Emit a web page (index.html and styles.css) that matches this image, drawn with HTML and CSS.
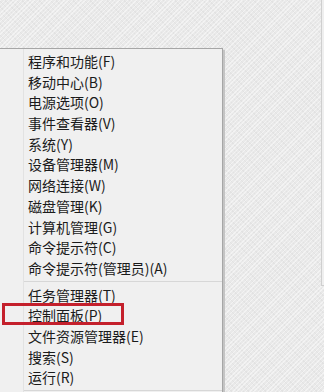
FILE: index.html
```html
<!DOCTYPE html>
<html lang="zh-CN">
<head>
<meta charset="utf-8">
<link rel="stylesheet" href="styles.css">
</head>
<body>
<div class="page">
  <div class="edge"></div>
  <div class="menu">
    <div class="group">
      <div class="item">程序和功能(F)</div>
      <div class="item">移动中心(B)</div>
      <div class="item">电源选项(O)</div>
      <div class="item">事件查看器(V)</div>
      <div class="item">系统(Y)</div>
      <div class="item">设备管理器(M)</div>
      <div class="item">网络连接(W)</div>
      <div class="item">磁盘管理(K)</div>
      <div class="item">计算机管理(G)</div>
      <div class="item">命令提示符(C)</div>
      <div class="item">命令提示符(管理员)(A)</div>
    </div>
    <div class="sep"></div>
    <div class="group">
      <div class="item">任务管理器(T)</div>
      <div class="item">控制面板(P)</div>
      <div class="item">文件资源管理器(E)</div>
      <div class="item">搜索(S)</div>
      <div class="item">运行(R)</div>
    </div>
    <div class="sep last"></div>
  </div>
  <div class="highlight"></div>
</div>
</body>
</html>
```

FILE: styles.css
```css
html, body {
  margin: 0;
  padding: 0;
}
body {
  width: 324px;
  height: 392px;
  overflow: hidden;
  background-color: #e9e9e9;
  background-image:
    repeating-linear-gradient(135deg, rgba(255,255,255,0.45) 0 1px, rgba(255,255,255,0) 1px 3px),
    repeating-linear-gradient(45deg, rgba(0,0,0,0.03) 0 1px, rgba(0,0,0,0) 1px 4px);
  font-family: "Noto Sans CJK SC", "Noto Sans", sans-serif;
}
.page {
  position: relative;
  width: 324px;
  height: 392px;
  padding-top: 48px;
  box-sizing: border-box;
  overflow: hidden;
}
.edge {
  position: absolute;
  left: 321px;
  top: 0;
  width: 3px;
  height: 285px;
  border-left: 1px solid #cfcfcf;
  border-bottom: 1px solid #cfcfcf;
  background: #efefef;
}
.menu {
  width: 222px;
  border-top: 1px solid #a6a6a6;
  border-right: 1px solid #a6a6a6;
  box-shadow: 2px 2px 0 #c4c4c4;
  padding: 2px 0 2px;
  background: linear-gradient(to right, #f0f0f0 0 23px, #e2e2e2 23px 24px, #f0f0f0 24px);
}
.group {
  display: flex;
  flex-direction: column;
}
.item {
  height: 20.7px;
  line-height: 20.7px;
  padding-left: 28px;
  font-size: 14px;
  color: #1b1b1b;
  white-space: nowrap;
}
.sep {
  height: 1px;
  margin: 2px 0 3px 24px;
  background: #d7d7d7;
}
.sep.last {
  margin-bottom: 0;
}
.highlight {
  position: absolute;
  left: 2px;
  top: 303px;
  width: 116px;
  height: 16px;
  border: 3px solid #c4202c;
}
```
